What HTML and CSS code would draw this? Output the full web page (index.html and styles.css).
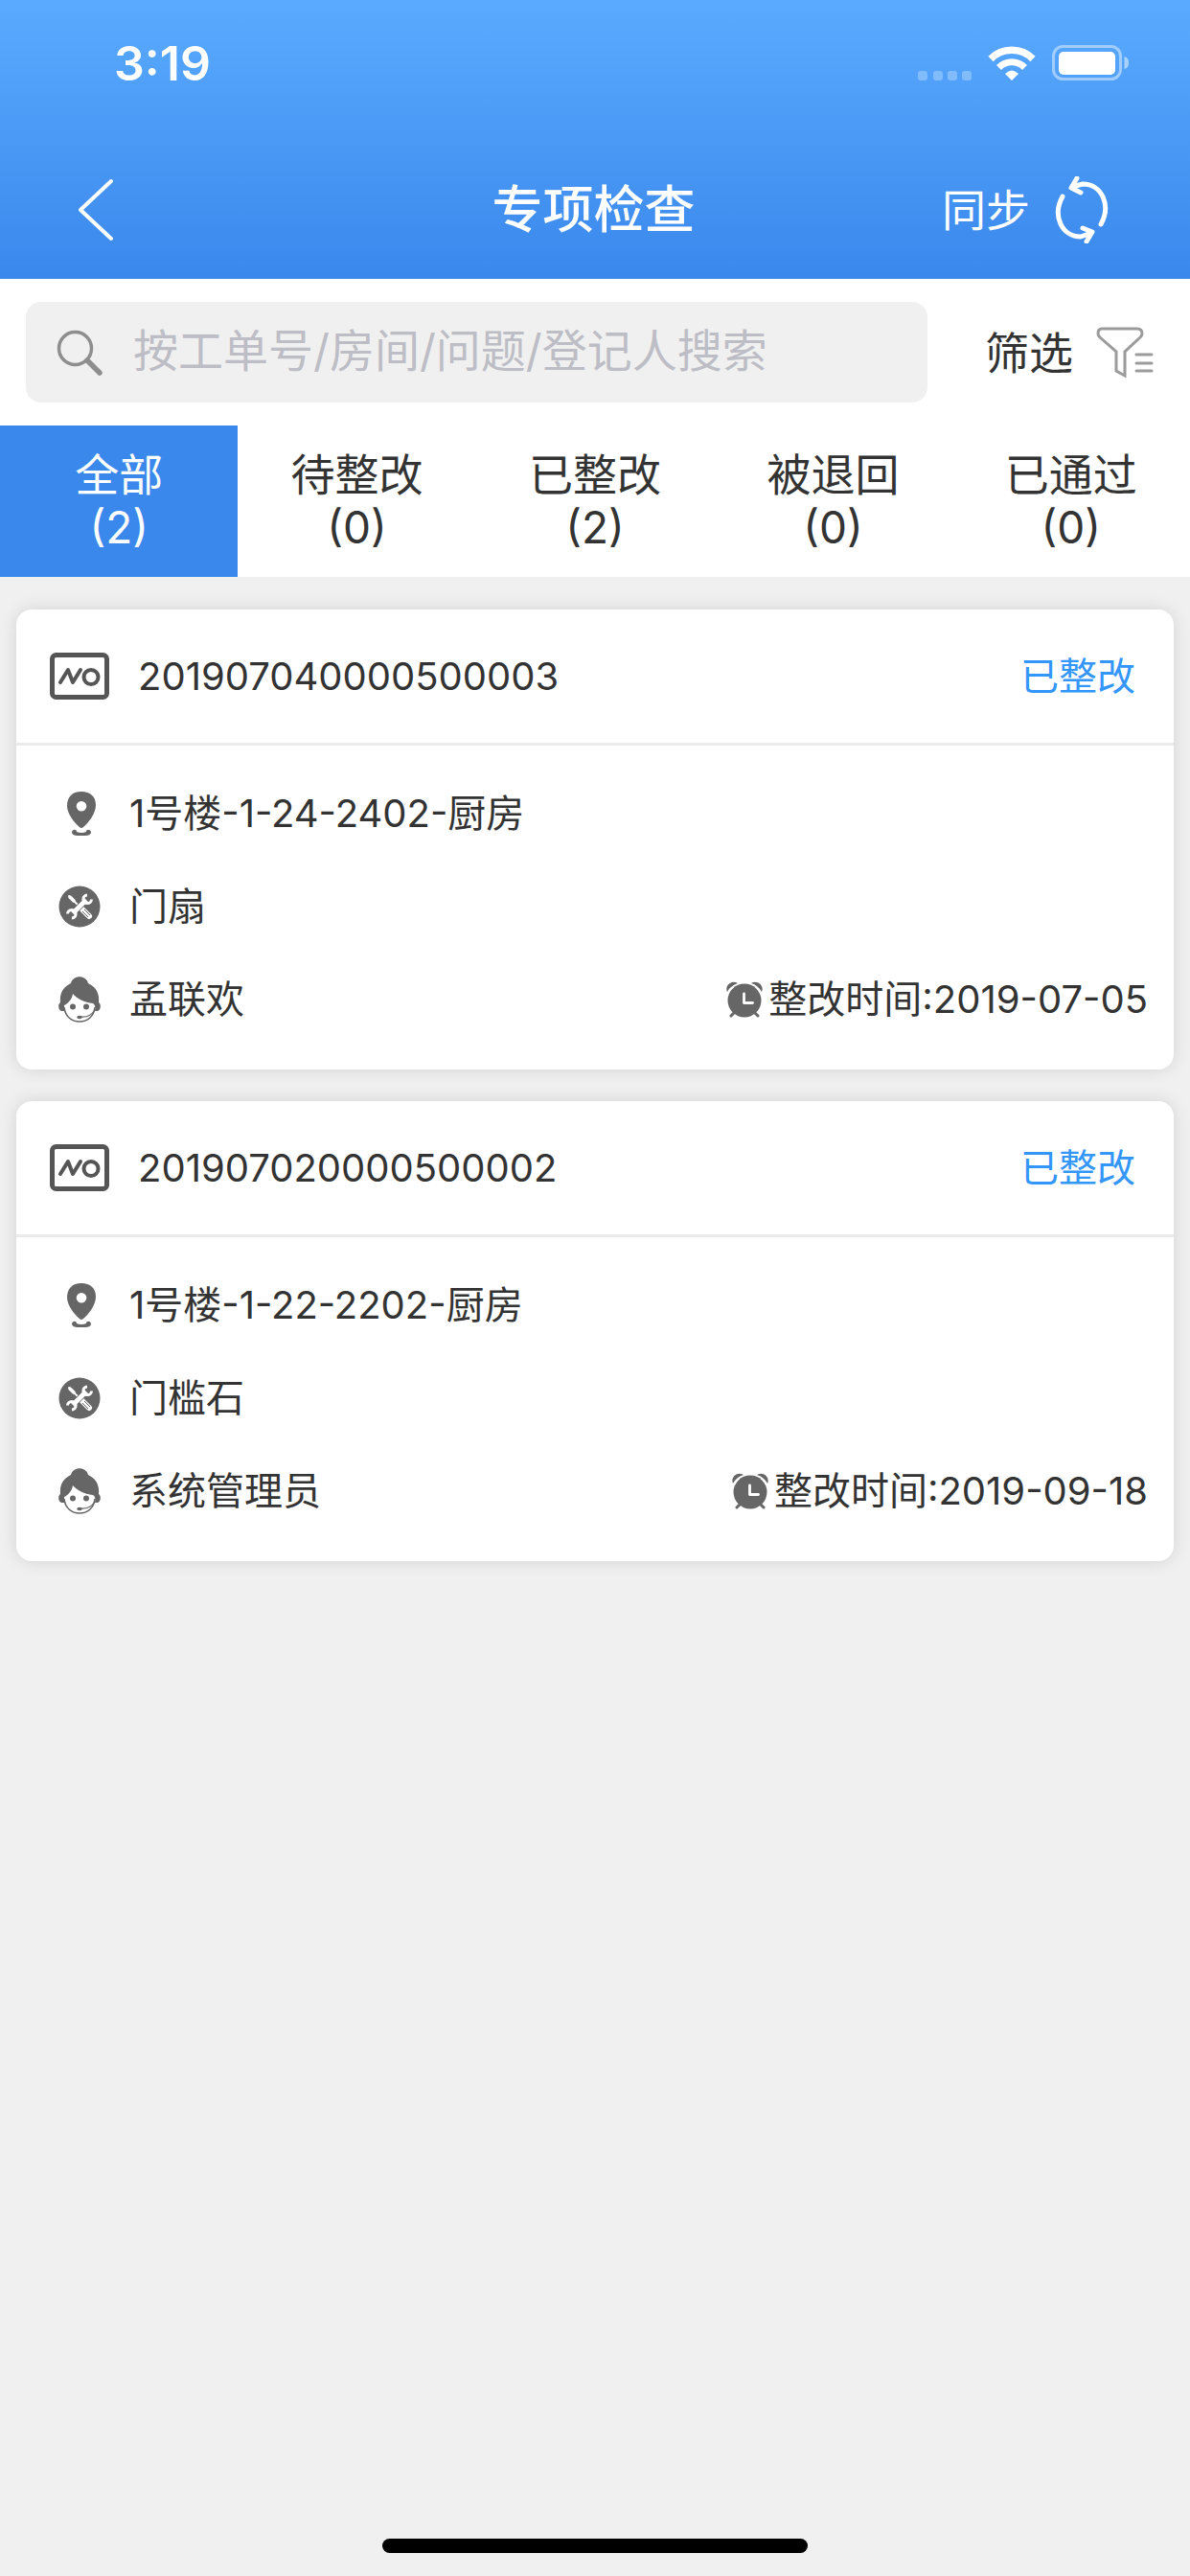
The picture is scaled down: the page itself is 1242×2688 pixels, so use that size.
FILE: index.html
```html
<!DOCTYPE html>
<html lang="zh-CN">
<head>
  <meta charset="UTF-8">
  <meta name="viewport" content="width=device-width, initial-scale=1.0">
  <title>专项检查</title>
  <link rel="stylesheet" href="styles.css">
</head>
<body>

<!-- Shared icons -->
<svg class="sprite" aria-hidden="true">
  <symbol id="icon-no" viewBox="0 0 62 49">
    <rect x="2.500" y="2.500" width="57" height="44" rx="4" fill="none" stroke="#555" stroke-width="5"/>
    <path d="M11 31 L19 18 L24 31 L32 18" fill="none" stroke="#555" stroke-width="4" stroke-linecap="round" stroke-linejoin="round"/>
    <circle cx="43" cy="25.500" r="7.500" fill="none" stroke="#555" stroke-width="4"/>
  </symbol>
  <symbol id="icon-pin" viewBox="0 0 44 48">
    <path fill="#666" fill-rule="evenodd" d="M24 1 C14 1 9 7 9 16 C9 24 17 34 22 38 Q24 40 26 38 C31 34 39 24 39 15 C39 6 33 1 24 1 Z M24 11 a5.3 5.3 0 1 1 0 10.6 a5.3 5.3 0 1 1 0 -10.6 Z"/>
    <path fill="#666" d="M14 44 C14 40 19 40 19 43 Q24 45 29 43 C29 40 34 40 34 44 Q33 47 28 47 H20 Q15 47 14 44 Z"/>
  </symbol>
  <symbol id="icon-tool" viewBox="0 0 44 44">
    <circle cx="22" cy="22" r="21.5" fill="#666"/>
    <path d="M11 11 L20 20" stroke="#fff" stroke-width="1.800" stroke-linecap="round"/>
    <path d="M12 12 L16 16" stroke="#fff" stroke-width="3.500" stroke-linecap="round"/>
    <path d="M25 25 L32 32" stroke="#fff" stroke-width="6" stroke-linecap="round"/>
    <path d="M25 27 L31 33 M27 25 L33 31" stroke="#666" stroke-width="1"/>
    <path d="M14 30 L30 14" stroke="#666" stroke-width="6.500"/>
    <path d="M15 29 L29 15" stroke="#fff" stroke-width="5"/>
    <path d="M30 10 a4.300 4.300 0 1 0 4.500 4.500 M9.500 29.500 a4.300 4.300 0 1 1 4.500 4.500" fill="none" stroke="#fff" stroke-width="3"/>
  </symbol>
  <symbol id="icon-person" viewBox="0 0 44 50">
    <path fill="#666" d="M13 8 C15 -1 29 -1 31 8 C39 12 43 18 42 28 C45 30 44 36 41 37 L38 37 C39 33 38 30 36 29 C27 28 19 24 15 19 C14 25 10 29 6 31 L6 37 L3 37 C0 36 -1 30 2 28 C1 18 5 12 13 8 Z"/>
    <path d="M6 33 C7 43 14 48 22 48 C30 48 37 43 38 33" fill="none" stroke="#666" stroke-width="1.6"/>
    <path d="M38 36 Q33 44 23 43" fill="none" stroke="#666" stroke-width="1.3"/>
    <ellipse cx="22" cy="43.500" rx="2.800" ry="1.800" fill="#666"/>
    <circle cx="15" cy="32.500" r="3" fill="#666"/>
    <circle cx="29" cy="32.500" r="3" fill="#666"/>
  </symbol>
  <symbol id="icon-clock" viewBox="0 0 38 38">
    <path fill="#666" d="M1 11 C-2 4 6 -2 12 2 Q5 4 1 11 Z M37 11 C40 4 32 -2 26 2 Q33 4 37 11 Z"/>
    <circle cx="19" cy="20" r="17.500" fill="#666"/>
    <path d="M8 33 L5 36 M30 33 L33 36" stroke="#666" stroke-width="3" stroke-linecap="round"/>
    <path d="M18.500 13 V22.500 H27.500" fill="none" stroke="#fff" stroke-width="2.800" stroke-linecap="round" stroke-linejoin="round"/>
  </symbol>
</svg>

<!-- Header Section -->
<div class="header">
  <div class="statusbar">
    <span class="time">3:19</span>
    <svg class="status-icons" width="222" height="46" viewBox="0 0 222 46" aria-hidden="true">
      <g fill="#fff" fill-opacity="0.28">
        <rect x="0" y="27" width="10" height="10" rx="3"/>
        <rect x="16" y="27" width="10" height="10" rx="3"/>
        <rect x="31" y="27" width="10" height="10" rx="3"/>
        <rect x="46" y="27" width="10" height="10" rx="3"/>
      </g>
      <g fill="none" stroke="#fff">
        <path d="M76 14.500 A31 31 0 0 1 120 14.500" stroke-width="7.500"/>
        <path d="M84.500 23.500 A19 19 0 0 1 111.500 23.500" stroke-width="7"/>
      </g>
      <path d="M98 37 L91 30 Q98 23 105 30 Z" fill="#fff"/>
      <rect x="141.500" y="1.500" width="70" height="34" rx="10" fill="none" stroke="#fff" stroke-opacity="0.45" stroke-width="3"/>
      <rect x="147" y="7" width="59" height="24" rx="5" fill="#fff"/>
      <path d="M215.500 12 Q220 13 220 18.500 Q220 24 215.500 25 Z" fill="#fff" fill-opacity="0.5"/>
    </svg>
  </div>
  <div class="titlebar">
    <button class="back" aria-label="返回">
      <svg width="38" height="66" viewBox="0 0 38 66"><path d="M34 3 L2 33 L34 63" fill="none" stroke="#fff" stroke-width="4" stroke-linecap="round" stroke-linejoin="round"/></svg>
    </button>
    <h1>专项检查</h1>
    <button class="sync">
      <span>同步</span>
      <svg width="56" height="70" viewBox="0 0 56 70" fill="none" stroke="#fff" stroke-width="5" stroke-linecap="round" stroke-linejoin="round" aria-hidden="true">
        <path d="M8 21 C-3 41 7 63 27 63 L38 59 M29 54 L39 58 L33 68"/>
        <path d="M48 50 C59 30 49 8 29 8 L18 11 M27 17 L17 12 L23 2"/>
      </svg>
    </button>
  </div>
</div>

<!-- Search Section -->
<div class="searchbar">
  <label class="searchbox">
    <svg width="48" height="48" viewBox="0 0 48 48" fill="none" stroke="#8e8e8e" aria-hidden="true">
      <circle cx="19.500" cy="19.500" r="17" stroke-width="3.500"/>
      <path d="M32 32 L45 45" stroke-width="5.500" stroke-linecap="round"/>
    </svg>
    <input type="text" aria-label="搜索" placeholder="按工单号/房间/问题/登记人搜索">
  </label>
  <button class="filter">
    <span>筛选</span>
    <svg width="60" height="54" viewBox="0 0 60 54" fill="none" stroke="#9b9b9b" stroke-width="3" aria-hidden="true">
      <path d="M6 2 H43 Q48 2 48 7 Q48 9 46 11 L30 26 V51 L21 46 V26 L4 11 Q2 9 2 7 Q2 2 6 2 Z" stroke-linejoin="miter"/>
      <path d="M42 29 H58 M42 38 H58 M42 46 H58" stroke-linecap="round"/>
    </svg>
  </button>
</div>

<!-- Status Tabs -->
<div class="tabs">
  <button class="tab active">全部<br>(2)</button>
  <button class="tab">待整改<br>(0)</button>
  <button class="tab">已整改<br>(2)</button>
  <button class="tab">被退回<br>(0)</button>
  <button class="tab">已通过<br>(0)</button>
</div>

<!-- Work Orders -->
<div class="list">
  <div class="card">
    <div class="card-head">
      <svg class="no" width="62" height="49"><use href="#icon-no"/></svg>
      <span class="number">201907040000500003</span>
      <span class="state">已整改</span>
    </div>
    <div class="card-body">
      <div class="row">
        <svg width="44" height="48"><use href="#icon-pin"/></svg>
        <span>1号楼-1-24-2402-厨房</span>
      </div>
      <div class="row">
        <svg width="44" height="44"><use href="#icon-tool"/></svg>
        <span>门扇</span>
      </div>
      <div class="row">
        <svg width="44" height="50"><use href="#icon-person"/></svg>
        <span>孟联欢</span>
        <span class="date"><svg width="38" height="38"><use href="#icon-clock"/></svg>整改时间:2019-07-05</span>
      </div>
    </div>
  </div>

  <div class="card">
    <div class="card-head">
      <svg class="no" width="62" height="49"><use href="#icon-no"/></svg>
      <span class="number">201907020000500002</span>
      <span class="state">已整改</span>
    </div>
    <div class="card-body">
      <div class="row">
        <svg width="44" height="48"><use href="#icon-pin"/></svg>
        <span>1号楼-1-22-2202-厨房</span>
      </div>
      <div class="row">
        <svg width="44" height="44"><use href="#icon-tool"/></svg>
        <span>门槛石</span>
      </div>
      <div class="row">
        <svg width="44" height="50"><use href="#icon-person"/></svg>
        <span>系统管理员</span>
        <span class="date"><svg width="38" height="38"><use href="#icon-clock"/></svg>整改时间:2019-09-18</span>
      </div>
    </div>
  </div>
</div>

<div class="home"></div>

</body>
</html>
```

FILE: styles.css
```css
/* General Styles */
* {
  box-sizing: border-box;
}
body {
  font-family: Inter, "Noto Sans CJK SC", sans-serif;
  font-weight: 390;
  margin: 0;
  min-height: 100vh;
  display: flex;
  flex-direction: column;
  background-color: #f0f0f0;
  color: #333;
}

button {
  border: none;
  background: none;
  padding: 0;
  margin: 0;
  font: inherit;
  color: inherit;
}

svg {
  display: block;
  flex-shrink: 0;
}

.sprite {
  position: absolute;
  width: 0;
  height: 0;
}

/* Header Style */
.header {
  background: linear-gradient(#5aabff, #3a88ec);
  color: white;
}

.statusbar {
  display: flex;
  justify-content: space-between;
  align-items: flex-start;
  height: 146px;
  padding: 47px 62px 0 119px;
}

.time {
  font-size: 50px;
  line-height: 38px;
  font-weight: 600;
}

.titlebar {
  display: grid;
  grid-template-columns: 1fr auto 1fr;
  align-items: center;
  height: 145px;
  padding: 0 85px 0 82px;
}

.titlebar h1 {
  margin: 0;
  font-size: 53px;
  line-height: 72px;
  font-weight: 500;
}

.back {
  justify-self: start;
}

.sync {
  justify-self: end;
  display: flex;
  align-items: center;
  gap: 26px;
  font-size: 46px;
  line-height: 60px;
}

/* Search Bar */
.searchbar {
  display: flex;
  align-items: center;
  padding: 24px 38px 24px 27px;
  background-color: white;
}

.searchbox {
  flex: 1;
  display: flex;
  align-items: center;
  gap: 32px;
  height: 105px;
  padding: 0 32px;
  margin-right: 60px;
  border-radius: 16px;
  background-color: #f0f0f0;
}

.searchbox input {
  flex: 1;
  min-width: 0;
  border: none;
  outline: none;
  padding: 0 0 4px;
  background: none;
  font: inherit;
  font-size: 47px;
  line-height: 60px;
}

.searchbox input::placeholder {
  color: #bdbdc5;
}

.filter {
  display: flex;
  align-items: center;
  gap: 24px;
  font-size: 46px;
  line-height: 60px;
}

/* Tabs */
.tabs {
  display: flex;
  background-color: white;
}

.tab {
  flex: 1;
  padding: 24px 0;
  font-size: 46px;
  line-height: 55px;
}

.tab.active {
  background-color: #3a88ec;
  color: white;
}

/* Cards */
.list {
  flex: 1;
  display: flex;
  flex-direction: column;
  gap: 33px;
  padding: 34px 17px;
}

.card {
  border-radius: 16px;
  background-color: white;
  box-shadow: 0 0 18px rgba(0, 0, 0, 0.12);
  font-size: 40px;
  line-height: 56px;
}

.card-head {
  display: flex;
  align-items: center;
  height: 142px;
  padding: 0 40px 0 35px;
  border-bottom: 3px solid #ebebeb;
}

.number {
  margin-left: 30px;
}

.state {
  margin-left: auto;
  color: #3296fa;
}

.card-body {
  padding: 22px 27px 25px 44px;
}

.row {
  display: flex;
  align-items: center;
  gap: 30px;
  height: 97px;
}

.date {
  display: flex;
  align-items: center;
  gap: 6px;
  margin-left: auto;
}

/* Home Indicator */
.home {
  width: 444px;
  max-width: 60%;
  height: 15px;
  margin: 0 auto 24px;
  border-radius: 8px;
  background-color: black;
}
```
